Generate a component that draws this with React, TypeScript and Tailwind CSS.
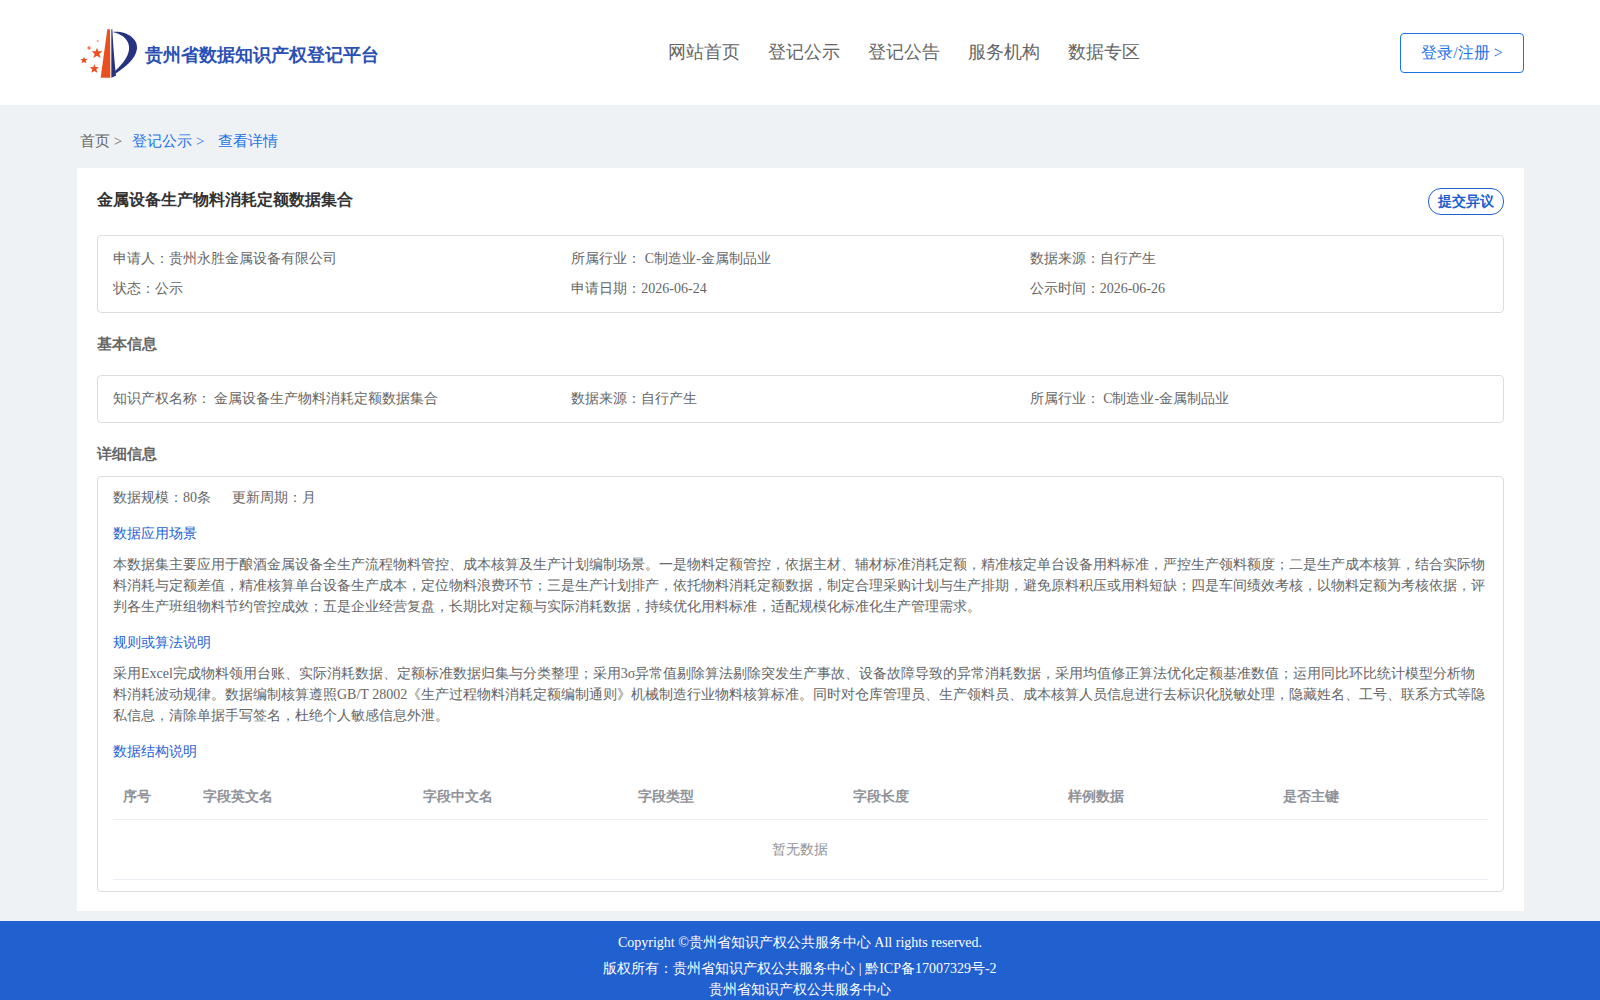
import type { ReactNode } from "react";

const navItems = ["网站首页", "登记公示", "登记公告", "服务机构", "数据专区"];

const summaryItems: ReactNode[] = [
  "申请人：贵州永胜金属设备有限公司",
  "所属行业： C制造业-金属制品业",
  "数据来源：自行产生",
  "状态：公示",
  "申请日期：2026-06-24",
  "公示时间：2026-06-26",
];

const basicItems: ReactNode[] = [
  <>
    知识产权名称：<span className="-ml-[1px]"> 金属设备生产物料消耗定额数据集合</span>
  </>,
  "数据来源：自行产生",
  "所属行业： C制造业-金属制品业",
];

const columns = [
  { label: "序号", width: "w-[80px]" },
  { label: "字段英文名", width: "w-[220px]" },
  { label: "字段中文名", width: "w-[215px]" },
  { label: "字段类型", width: "w-[215px]" },
  { label: "字段长度", width: "w-[215px]" },
  { label: "样例数据", width: "w-[215px]" },
  { label: "是否主键", width: "w-[215px]" },
];

const Logo = () => (
  <svg viewBox="27 20 180 156" className="w-[60px] h-[52px] shrink-0">
    <path d="M112 27 L120 27 L121 172 L92 172 Z" fill="#e8501f" />
    <path d="M124 27 L127 27 C129 70 133 120 138 166 L124 172 Z" fill="#26337f" />
    <path
      d="M128 35 C170 31 204 55 201 85 C197 117 165 140 136 160 L135 152 C162 128 180 102 177 78 C174 52 150 40 128 35 Z"
      fill="#26337f"
    />
    <path d="M81 82 L85 93 L97 93 L88 101 L92 113 L81 106 L70 113 L74 101 L65 93 L77 93 Z" fill="#e8501f" />
    <path d="M42 109 L45 116 L53 116 L47 121 L49 129 L42 125 L35 129 L37 121 L31 116 L39 116 Z" fill="#e8501f" />
    <path d="M73 131 L76 140 L87 141 L79 147 L82 157 L73 152 L64 157 L67 147 L59 141 L70 140 Z" fill="#e8501f" />
    <circle cx="57" cy="83" r="5" fill="#ee7a4f" />
    <circle cx="83" cy="62" r="3" fill="#f09a78" />
  </svg>
);

const InfoRow = ({ items }: { items: ReactNode[] }) => (
  <div className="grid grid-cols-3">
    {items.map((item, i) => (
      <div key={i} className="h-[30px] leading-[30px]">
        {item}
      </div>
    ))}
  </div>
);

const SubTitle = ({ children }: { children: string }) => (
  <div className="h-[21px] leading-[21px] text-[#1f62d2]">{children}</div>
);

export default function App() {
  return (
    <div className="min-h-screen bg-[#eff2f5] text-[14px] text-[#666] font-['Liberation_Serif',serif]">
      <header className="bg-white h-[105px]">
        <div className="w-[1447px] ml-[77px] h-full flex items-center">
          <div className="flex items-center gap-[6px] ml-[2px] mt-[1px]">
            <Logo />
            <span className="text-[18px] font-bold text-[#2a50b4] mt-[4px]">贵州省数据知识产权登记平台</span>
          </div>
          <nav className="flex gap-[28px] ml-[289px] text-[18px]">
            {navItems.map((item) => (
              <a key={item}>{item}</a>
            ))}
          </nav>
          <button className="ml-auto w-[124px] h-[40px] border border-[#1a73e8] rounded text-[16px] text-[#1a73e8]">
            登录/注册 &gt;
          </button>
        </div>
      </header>

      <main className="w-[1447px] ml-[77px]">
        <div className="h-[63px] flex items-center text-[15px] pl-[3px] pt-[10px]">
          <span>首页 &gt;</span>
          <span className="ml-[10px] text-[#1a73e8]">登记公示 &gt;</span>
          <span className="ml-[14px] text-[#1a73e8]">查看详情</span>
        </div>

        <section className="bg-white p-[20px] h-[743px]">
          <div className="flex items-center justify-between h-[27px] mb-[20px]">
            <h1 className="text-[16px] font-bold text-[#333] -mt-[3px]">金属设备生产物料消耗定额数据集合</h1>
            <button className="h-[27px] px-[9px] border border-[#2060cf] rounded-[13px] text-[14px] font-bold text-[#2060cf]">
              提交异议
            </button>
          </div>

          <div className="border border-[#ddd] rounded px-[15px] py-[8px]">
            <InfoRow items={summaryItems} />
          </div>

          <h2 className="mt-[21px] mb-[20px] text-[15px] font-bold h-[21px] leading-[21px]">基本信息</h2>
          <div className="border border-[#ddd] rounded px-[15px] py-[8px]">
            <InfoRow items={basicItems} />
          </div>

          <h2 className="mt-[21px] mb-[11px] text-[15px] font-bold h-[21px] leading-[21px]">详细信息</h2>
          <div className="border border-[#ddd] rounded px-[15px] pt-[10px] h-[416px]">
            <div className="flex gap-[21px] h-[21px] leading-[21px] mb-[15px]">
              <span>数据规模：80条</span>
              <span>更新周期：月</span>
            </div>

            <SubTitle>数据应用场景</SubTitle>
            <p className="mt-[10px] mb-[15px] leading-[21px]">
              本数据集主要应用于酿酒金属设备全生产流程物料管控、成本核算及生产计划编制场景。一是物料定额管控，依据主材、辅材标准消耗定额，精准核定单台设备用料标准，严控生产领料额度；二是生产成本核算，结合实际物料消耗与定额差值，精准核算单台设备生产成本，定位物料浪费环节；三是生产计划排产，依托物料消耗定额数据，制定合理采购计划与生产排期，避免原料积压或用料短缺；四是车间绩效考核，以物料定额为考核依据，评判各生产班组物料节约管控成效；五是企业经营复盘，长期比对定额与实际消耗数据，持续优化用料标准，适配规模化标准化生产管理需求。
            </p>

            <SubTitle>规则或算法说明</SubTitle>
            <p className="mt-[10px] mb-[15px] leading-[21px]">
              采用Excel完成物料领用台账、实际消耗数据、定额标准数据归集与分类整理；采用3σ异常值剔除算法剔除突发生产事故、设备故障导致的异常消耗数据，采用均值修正算法优化定额基准数值；运用同比环比统计模型分析物料消耗波动规律。数据编制核算遵照GB/T 28002《生产过程物料消耗定额编制通则》机械制造行业物料核算标准。同时对仓库管理员、生产领料员、成本核算人员信息进行去标识化脱敏处理，隐藏姓名、工号、联系方式等隐私信息，清除单据手写签名，杜绝个人敏感信息外泄。
            </p>

            <SubTitle>数据结构说明</SubTitle>

            <div className="mt-[11px] text-[#909399]">
              <div className="flex h-[47px] items-center border-b border-[#ebeef5] font-bold">
                {columns.map((col) => (
                  <div key={col.label} className={`${col.width} pl-[10px]`}>
                    {col.label}
                  </div>
                ))}
              </div>
              <div className="flex h-[60px] items-center justify-center pr-[1px] border-b border-[#ebeef5]">暂无数据</div>
            </div>
          </div>
        </section>
      </main>

      <footer className="mt-[10px] bg-[#2060cf] h-[79px] text-white text-center overflow-hidden pt-[11px]">
        <div className="h-[21px] leading-[21px] mb-[5px]">Copyright ©贵州省知识产权公共服务中心 All rights reserved.</div>
        <div className="h-[21px] leading-[21px]">版权所有：贵州省知识产权公共服务中心 | 黔ICP备17007329号-2</div>
        <div className="h-[21px] leading-[21px]">贵州省知识产权公共服务中心</div>
      </footer>
    </div>
  );
}
